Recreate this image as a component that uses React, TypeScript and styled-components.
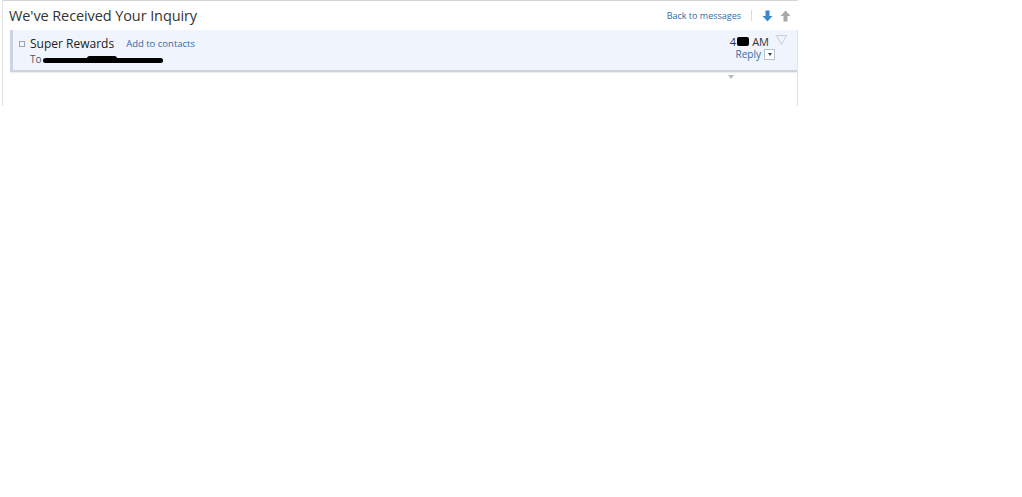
import React from "react";
import styled, { createGlobalStyle } from "styled-components";

const GlobalStyle = createGlobalStyle`
  body {
    margin: 0;
    background: #fff;
    font-family: "Open Sans", "Noto Sans", Arial, sans-serif;
  }
`;

const Page = styled.div`
  width: 795px;
  height: 105px;
  border-top: 1px solid #d4d4d4;
  border-left: 1px solid #e4e4e4;
  margin-left: 2px;
  display: flex;
  flex-direction: column;
`;

const TopBar = styled.div`
  height: 29px;
  display: flex;
  align-items: center;
  justify-content: space-between;
  padding: 0 7px 0 6px;
`;

const Title = styled.h1`
  margin: 0;
  font-size: 14.5px;
  font-weight: 400;
  color: #333;
  letter-spacing: -0.1px;
`;

const Nav = styled.div`
  display: flex;
  align-items: center;
  gap: 7px;
`;

const Link = styled.a<{ $size?: number }>`
  color: #2f6ca8;
  font-size: ${(p) => p.$size ?? 10}px;
  text-decoration: none;
  cursor: pointer;
`;

const Divider = styled.span`
  width: 1px;
  height: 11px;
  background: #dcdcdc;
  margin: 0 3px;
`;

const ArrowButton = styled.svg`
  width: 11px;
  height: 12px;
  display: block;
`;

const Message = styled.div`
  flex: 1;
  margin-left: 7px;
  border-right: 1px solid #e2e2e2;
  display: flex;
  flex-direction: column;
`;

const Header = styled.div`
  height: 37px;
  background: #f0f4fc;
  border-left: 3px solid #c9d4e4;
  border-bottom: 2px solid #cfd2d6;
  box-shadow: 0 1px 1px #eceff2;
  display: flex;
  justify-content: space-between;
  padding: 3px 10px 0 6px;
`;

const Sender = styled.div`
  display: flex;
  flex-direction: column;
`;

const SenderLine = styled.div`
  display: flex;
  align-items: center;
  height: 20px;
`;

const Square = styled.span`
  width: 4px;
  height: 4px;
  border: 1px solid #9aa6b5;
  margin-right: 5px;
  margin-top: 1px;
`;

const Name = styled.span`
  font-size: 12px;
  color: #222;
  margin-right: 12px;
`;

const ToLine = styled.div`
  display: flex;
  align-items: center;
  padding-left: 11px;
  font-size: 10px;
  color: #555;
  margin-top: -1px;
`;

const Redacted = styled.span`
  display: inline-block;
  width: 120px;
  height: 5px;
  background: #000;
  border-radius: 3px;
  margin-left: 1px;
  margin-top: 2px;
  position: relative;
  &::before {
    content: "";
    position: absolute;
    left: 44px;
    top: -2px;
    width: 30px;
    height: 5px;
    background: #000;
    border-radius: 3px;
  }
`;

const Meta = styled.div`
  display: flex;
  flex-direction: column;
  align-items: flex-end;
`;

const TimeLine = styled.div`
  display: flex;
  align-items: center;
  height: 17px;
  font-size: 11px;
  color: #333;
`;

const Blot = styled.span`
  display: inline-block;
  width: 12px;
  height: 9px;
  background: #000;
  border-radius: 2px;
  margin: 0 3px 0 1px;
`;

const Funnel = styled.svg`
  width: 11px;
  height: 10px;
  margin-left: 7px;
  margin-top: -4px;
`;

const ReplyLine = styled.div`
  display: flex;
  align-items: center;
  gap: 3px;
  margin-right: 12px;
  margin-top: -3px;
`;

const Dropdown = styled.span`
  width: 9px;
  height: 9px;
  border: 1px solid #b9c3cf;
  background: #fff;
  display: flex;
  align-items: center;
  justify-content: center;
  &::after {
    content: "";
    border-left: 2px solid transparent;
    border-right: 2px solid transparent;
    border-top: 3px solid #345;
  }
`;

const Body = styled.div`
  flex: 1;
  display: flex;
  justify-content: flex-end;
  padding-right: 63px;
  padding-top: 3px;
`;

const Expand = styled.span`
  width: 0;
  height: 0;
  border-left: 3px solid transparent;
  border-right: 3px solid transparent;
  border-top: 4px solid #b6bcc4;
`;

export default function App() {
  return (
    <>
      <GlobalStyle />
      <Page>
        <TopBar>
          <Title>We've Received Your Inquiry</Title>
          <Nav>
            <Link $size={9}>Back to messages</Link>
            <Divider />
            <ArrowButton viewBox="0 0 11 12">
              <path d="M3.5 0.5h4v5.5h3l-5 5.5-5-5.5h3z" fill="#3b86cf" />
            </ArrowButton>
            <ArrowButton viewBox="0 0 11 12">
              <path d="M3.5 11.5h4v-5.5h3l-5-5.5-5 5.5h3z" fill="#a4a9ae" />
            </ArrowButton>
          </Nav>
        </TopBar>
        <Message>
          <Header>
            <Sender>
              <SenderLine>
                <Square />
                <Name>Super Rewards</Name>
                <Link $size={9.5}>Add to contacts</Link>
              </SenderLine>
              <ToLine>
                To
                <Redacted />
              </ToLine>
            </Sender>
            <Meta>
              <TimeLine>
                4<Blot />AM
                <Funnel viewBox="0 0 11 10">
                  <path d="M0.5 0.5h10l-5 9z" fill="none" stroke="#c4c9cf" strokeWidth="0.9" />
                </Funnel>
              </TimeLine>
              <ReplyLine>
                <Link $size={10}>Reply</Link>
                <Dropdown />
              </ReplyLine>
            </Meta>
          </Header>
          <Body>
            <Expand />
          </Body>
        </Message>
      </Page>
    </>
  );
}
